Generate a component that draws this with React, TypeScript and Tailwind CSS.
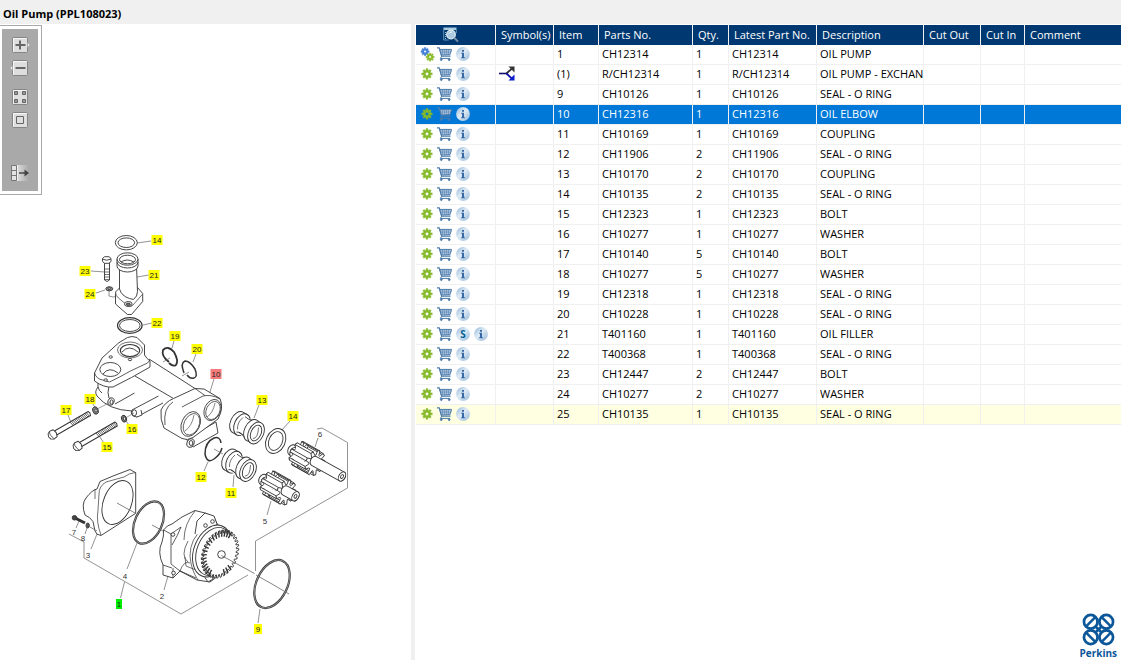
import { clsx } from "clsx"

type Part = {
  item: string
  partNo: string
  qty: number
  description: string
  exchange?: boolean
  assembly?: boolean
  service?: boolean
}

const parts: Part[] = [
  { item: "1", partNo: "CH12314", qty: 1, description: "OIL PUMP", assembly: true },
  { item: "(1)", partNo: "R/CH12314", qty: 1, description: "OIL PUMP - EXCHAN", exchange: true },
  { item: "9", partNo: "CH10126", qty: 1, description: "SEAL - O RING" },
  { item: "10", partNo: "CH12316", qty: 1, description: "OIL ELBOW" },
  { item: "11", partNo: "CH10169", qty: 1, description: "COUPLING" },
  { item: "12", partNo: "CH11906", qty: 2, description: "SEAL - O RING" },
  { item: "13", partNo: "CH10170", qty: 2, description: "COUPLING" },
  { item: "14", partNo: "CH10135", qty: 2, description: "SEAL - O RING" },
  { item: "15", partNo: "CH12323", qty: 1, description: "BOLT" },
  { item: "16", partNo: "CH10277", qty: 1, description: "WASHER" },
  { item: "17", partNo: "CH10140", qty: 5, description: "BOLT" },
  { item: "18", partNo: "CH10277", qty: 5, description: "WASHER" },
  { item: "19", partNo: "CH12318", qty: 1, description: "SEAL - O RING" },
  { item: "20", partNo: "CH10228", qty: 1, description: "SEAL - O RING" },
  { item: "21", partNo: "T401160", qty: 1, description: "OIL FILLER", service: true },
  { item: "22", partNo: "T400368", qty: 1, description: "SEAL - O RING" },
  { item: "23", partNo: "CH12447", qty: 2, description: "BOLT" },
  { item: "24", partNo: "CH10277", qty: 2, description: "WASHER" },
  { item: "25", partNo: "CH10135", qty: 1, description: "SEAL - O RING" },
]

const columns = [
  { label: "Symbol(s)", width: "w-[58px]" },
  { label: "Item", width: "w-[45px]" },
  { label: "Parts No.", width: "w-[94px]" },
  { label: "Qty.", width: "w-[36px]" },
  { label: "Latest Part No.", width: "w-[88px]" },
  { label: "Description", width: "w-[107px]" },
  { label: "Cut Out", width: "w-[57px]" },
  { label: "Cut In", width: "w-[44px]" },
  { label: "Comment", width: "" },
]

// Points of a toothed ellipse, rotated by `rot` degrees
function toothed(cx: number, cy: number, rx: number, ry: number, rot: number, teeth: number, depth: number) {
  const a = (rot * Math.PI) / 180
  const pts: number[][] = []
  for (let i = 0; i < teeth; i++) {
    const shape = [
      [0.1, depth],
      [0.3, 1],
      [0.65, 1],
      [0.85, depth],
    ]
    for (const [off, r] of shape) {
      const t = ((i + off) / teeth) * Math.PI * 2
      const x = Math.cos(t) * rx * r
      const y = Math.sin(t) * ry * r
      pts.push([cx + x * Math.cos(a) - y * Math.sin(a), cy + x * Math.sin(a) + y * Math.cos(a)])
    }
  }
  return pts
}

const toPoints = (pts: number[][]) => pts.map((p) => p.map((n) => n.toFixed(2)).join(",")).join(" ")

/* ---------- small icons ---------- */

const COG =
  "M5 0h2v1.6l1.2.5L9.4 1l1.5 1.5-1.1 1.2.5 1.2H12v2.2h-1.7l-.5 1.2 1.1 1.2L9.4 11l-1.2-1.1-1.2.5V12H5v-1.6l-1.2-.5L2.6 11 1.1 9.5l1.1-1.2-.5-1.2H0V4.9h1.7l.5-1.2-1.1-1.2L2.6 1l1.2 1.1L5 1.6z M6 4.200a1.800 1.800 0 1 0 0 3.600a1.800 1.800 0 1 0 0-3.600z"

function GearIcon({ double }: { double?: boolean }) {
  if (double) {
    return (
      <svg viewBox="0 0 12 14" className="w-3 h-3.5 overflow-visible">
        <path d={COG} fill="#3f7fd6" stroke="#3f7fd6" strokeWidth=".7" fillRule="evenodd" transform="translate(0 .5) scale(.68)" />
        <path d={COG} fill="#8cbb2c" stroke="#8cbb2c" strokeWidth=".7" fillRule="evenodd" transform="translate(5 6) scale(.68)" />
      </svg>
    )
  }
  return (
    <svg viewBox="0 0 12 14" className="w-3 h-3.5">
      <path d={COG} fill="#86b92b" stroke="#86b92b" strokeWidth=".5" fillRule="evenodd" transform="translate(.7 1.6) scale(.88)" />
    </svg>
  )
}

function CartIcon() {
  return (
    <svg viewBox="0 0 15 14" className="w-[15px] h-3.5" fill="none" stroke="#4c7bab">
      <path d="M0 .8h2.2l2.4 8.4h9" strokeWidth="1.2" />
      <path d="M2.8 2.4H14.6L13 7.6 4.4 8z" fill="#c9dbec" />
      <path d="M3.2 4.1h11M3.8 5.8h9.8M5.4 2.4v5.4M7.4 2.4v5.4M9.4 2.4v5.2M11.4 2.4v5.2" strokeWidth=".6" />
      <path d="M4.8 9.2l-1.4 2.2H13" />
      <circle cx="4.3" cy="12.6" r=".9" fill="#4c7bab" />
      <circle cx="12.2" cy="12.6" r=".9" fill="#4c7bab" />
    </svg>
  )
}

function Orb({ service }: { service?: boolean }) {
  return (
    <svg viewBox="0 0 14 14" className="w-3.5 h-3.5">
      <defs>
        <linearGradient id="orb" x1="0" y1="0" x2="1" y2="1">
          <stop offset="0" stopColor="#93b7d8" />
          <stop offset=".45" stopColor="#dfebf5" />
          <stop offset="1" stopColor="#94b7d7" />
        </linearGradient>
      </defs>
      <circle cx="7" cy="7" r="6.9" fill="url(#orb)" />
      {service ? (
        <text x="7" y="10.6" textAnchor="middle" fontSize="10" fontWeight="700" fill="#006296">
          S
        </text>
      ) : (
        <path d="M6 2.9h2v1.8H6z M5.2 5.8H8v4.4h.9v1H5.2v-1H6V6.8h-.8z" fill="#3668a5" />
      )}
    </svg>
  )
}

function ExchangeIcon() {
  return (
    <svg viewBox="0 0 16 15" className="w-4 h-[15px]" fill="none">
      <path d="M0 7.5h8" stroke="#10106c" strokeWidth="1.600" />
      <path d="M7.5 7.5l6-5.5" stroke="#333" strokeWidth="1.800" />
      <path d="M7.5 7.5l5.5 5.2" stroke="#1010a8" strokeWidth="1.800" />
      <path d="M9.500.500h6v6z" fill="#333" />
      <path d="M15.500 8.500v6h-6z" fill="#0a1fd0" />
    </svg>
  )
}

function PreviewIcon() {
  return (
    <svg viewBox="0 0 16 16" className="block w-4 h-4" fill="none">
      <path d="M.5.500h13v2.500H.5z" fill="#a9cade" />
      <path d="M.7 1v12h5M13.3 3v3" stroke="#5f93b5" />
      <path d="M2.5 5v7" stroke="#9fc3d8" strokeDasharray="1 1" />
      <circle cx="8" cy="7.5" r="4.3" fill="#a8c9df" stroke="#e4eff6" strokeWidth="1.2" />
      <path d="M6 6.5a3 3 0 0 1 3-1.5" stroke="#fff" />
      <path d="M11.2 10.8l3.8 3.8" stroke="#7590a6" strokeWidth="2" />
    </svg>
  )
}

/* ---------- drawing toolbar ---------- */

const TOOLS = [
  { label: "Zoom in", gap: "", shape: <path d="M3.500 8h10M8 3.500v9" strokeWidth="2" />, tab: "M15.500 5.500l2.500 2.500-2.500 2.500z" },
  { label: "Zoom out", gap: "mt-[7px]", shape: <path d="M3.500 8h10" strokeWidth="2" />, tab: "M.5 5.500l-2.500 2.500 2.500 2.500z" },
  {
    label: "Fit to window",
    gap: "mt-[13px]",
    shape: <path d="M2.500 2.500h3v3h-3zM10.500 2.500h3v3h-3zM2.500 10.500h3v3h-3zM10.500 10.500h3v3h-3z" fill="#999" />,
  },
  { label: "Actual size", gap: "mt-[7px]", shape: <path d="M4.500 4.500h7v7h-7z" /> },
]

function Toolbar() {
  return (
    <div className="w-[42px] border border-l-0 border-[#a8a8a8] bg-white py-[3px] pl-0.5 pr-[3px]">
      <div className="flex flex-col items-center bg-[#a9a9a9] pt-2 pb-2.5">
        {TOOLS.map((tool) => (
          <button key={tool.label} type="button" aria-label={tool.label} className={clsx("block", tool.gap)}>
            <svg viewBox="0 0 16 16" className="block w-4 h-4 overflow-visible" fill="none" stroke="#666">
              <rect x=".5" y=".5" width="15" height="15" rx="1" fill="#dedede" stroke="#858585" />
              <path d="M1.500 14.500v-13h13" stroke="#f6f6f6" />
              {tool.tab && <path d={tool.tab} fill="#eee" stroke="#9a9a9a" strokeWidth=".5" />}
              {tool.shape}
            </svg>
          </button>
        ))}
        <button type="button" aria-label="Toggle panel" className="mt-[37px]">
          <svg viewBox="0 0 16 16" className="block w-4 h-4 overflow-visible" fill="none" stroke="#777">
            <defs>
              <linearGradient id="fade">
                <stop offset="0" stopColor="#dcdcdc" />
                <stop offset="1" stopColor="#a9a9a9" />
              </linearGradient>
            </defs>
            <path d="M-.5.500h5v15h-5z" fill="#e4e4e4" />
            <path d="M-.500 5.500h5M-.500 10.500h5" />
            <path d="M5.500 0h11v16h-11z" fill="url(#fade)" stroke="none" />
            <path d="M5.500 0v16" stroke="#f0f0f0" />
            <path d="M7 8h7" stroke="#444" strokeWidth="1.500" />
            <path d="M12.500 4.500L17 8l-4.500 3.500z" fill="#444" stroke="none" />
          </svg>
        </button>
      </div>
    </div>
  )
}

/* ---------- exploded view ---------- */

const callouts = [
  { n: "14", x: 157, y: 240 },
  { n: "23", x: 85, y: 271 },
  { n: "21", x: 154, y: 275 },
  { n: "24", x: 90, y: 294 },
  { n: "22", x: 157, y: 323 },
  { n: "19", x: 175, y: 336 },
  { n: "20", x: 197, y: 349 },
  { n: "10", x: 216, y: 374, fill: "#f47c7c" },
  { n: "18", x: 90, y: 399 },
  { n: "13", x: 262, y: 400 },
  { n: "17", x: 66, y: 410 },
  { n: "14", x: 293, y: 416 },
  { n: "16", x: 132, y: 429 },
  { n: "15", x: 107, y: 447 },
  { n: "12", x: 201, y: 477 },
  { n: "11", x: 231, y: 493 },
  { n: "1", x: 119, y: 604, fill: "#00f000" },
  { n: "9", x: 258, y: 629 },
]

const plainNumbers = [
  { n: "6", x: 320, y: 434 },
  { n: "5", x: 265, y: 521 },
  { n: "7", x: 74, y: 532 },
  { n: "8", x: 83, y: 538 },
  { n: "3", x: 88, y: 555 },
  { n: "4", x: 125, y: 576 },
  { n: "2", x: 162, y: 596 },
]

function Bolt({ x, y, length, angle }: { x: number; y: number; length: number; angle: number }) {
  const threads = []
  for (let t = length * 0.5; t < length - 1; t += 1.7) threads.push(`M${t.toFixed(1)} -2.300l1 4.600`)
  return (
    <g transform={`translate(${x} ${y}) rotate(${angle})`}>
      <path d={`M3 -2.300H${length}q1.500 2.300 0 4.600H3z`} />
      <path d={threads.join("")} strokeWidth=".7" />
      <path d="M-4 -3l2.500-1.500 4 .5 1.200 4-1.200 4-4 .5L-4 3l-1-3z" />
      <path d="M-1.500 -4.300l-1 2.200.5 4 1 2.400" strokeWidth=".7" />
    </g>
  )
}

function Coupling({ x, y }: { x: number; y: number }) {
  return (
    <g transform={`translate(${x} ${y})`}>
      <ellipse rx="7.500" ry="11.500" transform="rotate(25)" />
      <path d="M4.800 -10.400l5 2.800-9.800 21-5-2.800" stroke="none" />
      <path d="M4.800 -10.400l4.500 2.500M-4.800 10.400l4 2.300" />
      <ellipse cx="4" cy="2.200" rx="7.500" ry="11.500" transform="rotate(25 4 2.200)" />
      <path d="M6 -5.500L18 1 10 17-3 9z" stroke="none" />
      <path d="M7 -5.800q4 4 8.500 3.500M-1.500 9.500q5 0 7.500 5M1 10l4 2.600" />
      <path d="M5 -5q-6 5-5.500 12" strokeWidth=".7" />
      <ellipse cx="14" cy="8" rx="7.500" ry="11.500" transform="rotate(25 14 8)" />
      <ellipse cx="18" cy="10.500" rx="7.500" ry="11.500" transform="rotate(25 18 10.500)" />
      <ellipse cx="18" cy="10.500" rx="5" ry="8.300" transform="rotate(25 18 10.500)" />
      <path d="M15 16q5 0 5.500-11" strokeWidth=".7" />
    </g>
  )
}

function Pinion({ x, y, shaft }: { x: number; y: number; shaft: number }) {
  const back = toothed(x - 7, y - 5, 9, 13, 25, 9, 0.64)
  const front = toothed(x + 9, y + 4, 9, 13, 25, 9, 0.64)
  // faces turned towards the back of the gear are painted last
  const facing = (i: number) => -(back[i][0] - (x - 7)) * 16 - (back[i][1] - (y - 5)) * 9
  const teeth = back
    .map((_, i) => i)
    .filter((i) => i % 4 === 1)
    .sort((a, b) => facing(a) - facing(b))
  return (
    <g>
      <g transform={`translate(${x - 14} ${y - 9})`}>
        <ellipse rx="4" ry="5.500" transform="rotate(25)" />
        <ellipse cx="3" cy="1.500" rx="4" ry="5.500" transform="rotate(25)" />
      </g>
      <polygon points={toPoints(back)} />
      {teeth.map((i) => (
        <g key={i}>
          <polygon points={toPoints([back[i - 1], front[i - 1], front[i + 2], back[i + 2]])} stroke="none" />
          <polygon points={toPoints([back[i], back[i + 1], front[i + 1], front[i]])} strokeWidth=".9" />
        </g>
      ))}
      <polygon points={toPoints(front)} />
      <g transform={`translate(${x + 8} ${y + 2}) rotate(29)`}>
        <path d={`M0 -5H${shaft}a3.200 5 0 0 1 0 10H0a3.500 5 0 0 1 0-10z`} />
        <ellipse cx={shaft} rx="3.200" ry="5" />
        <ellipse cx={shaft} rx="1.300" ry="2" />
      </g>
    </g>
  )
}

function PumpDrawing() {
  const outerTeeth = toothed(220, 554, 17.5, 25, 22, 34, 0.87)
  return (
    <svg
      viewBox="0 195 360 450"
      className="block w-[360px] h-[450px] max-w-full"
      fill="#fff"
      stroke="#333"
      strokeWidth=".9"
      strokeLinejoin="round"
      role="img"
      aria-label="Oil pump exploded view"
    >
      {/* Assembly bracket and leader lines */}
      <g fill="none" stroke="#777" strokeWidth=".8">
        <path d="M317 429l5-1 25.500 14.500v45.500L255.500 541v30M248 575L181 614 84 558v-16l-15-8M124.500 582l-4 16" />
        <path d="M137 243l14-2M91 271l14 1M137 277l12-2M96 293l9-3M109 286v10l4 1 15-2v6M143 325l9-2" />
        <path d="M174 341l-2 7M196 354l-3 8M214 379l-5 16M92 403l3 4M68 415l4 10M129 425l-3-4M104 443l-7-10" />
        <path d="M259 405l-5 13M290 421l-9 10M204 471l4-9M233 487l1-12M318 438l-3 9M267 515l4-14" />
        <path d="M91 549l6-15M127 569l10-26M164 590l4-14M258 623l2-14M76 528l3-7M85 534l2-6" />
      </g>

      {/* 14, 21-24: filler neck */}
      <ellipse cx="126.300" cy="242.700" rx="11" ry="7.200" />
      <ellipse cx="126.300" cy="242.700" rx="8.300" ry="4.800" />
      <path d="M115.500 292v12l12 10.500h4l11.200-13v-8l-6-7H121z" />
      <path d="M115.500 292q0 4 3 6l9.500 8q3 1.500 5-1l9.700-11" strokeWidth=".7" />
      <path d="M119.500 266v23q2 7 10 9.500l4 1q4-3 4-8l-1-25.500" />
      <path d="M117 259v7a10.500 6 0 0 0 21 0v-7" />
      <path d="M117 262a10.500 6 0 0 0 21 0" />
      <ellipse cx="127.500" cy="259" rx="10.500" ry="6.200" />
      <ellipse cx="127.500" cy="259.500" rx="8" ry="4.300" />
      <path d="M121 262q6-4 13 0" />
      <ellipse cx="128.300" cy="304" rx="3.800" ry="2.500" />
      <ellipse cx="128.300" cy="304.300" rx="2" ry="1.200" fill="#777" />
      <path d="M104.500 262v18q2.500 3 5 0v-18z" />
      <path d="M104.500 269h5M104.500 272h5M104.500 274.500h5M104.500 277h5M104.500 279.500h5" strokeWidth=".7" />
      <path d="M102.500 258.500l2-1.800h4.500l2 1.800v3l-2 1.800h-4.500l-2-1.800zM102.500 259q4 2.500 8.500 0" />
      <ellipse cx="109.300" cy="288.800" rx="3.500" ry="2" fill="#999" />
      <ellipse cx="109.300" cy="288.800" rx="1.500" ry=".8" />
      <ellipse cx="129.800" cy="325.500" rx="12.300" ry="7.800" strokeWidth="1.200" />
      <ellipse cx="129.800" cy="325.500" rx="10.300" ry="6" />

      {/* 10: elbow body */}
      <path d="M98 382L96 392L100 398Q112 410 132 411L138 417L163 404L175 402L196 389L149 359Z" stroke="none" />
      <path d="M98 383L98 387Q94 392 97 396Q108 410 132 411M98 387Q99 391 102 393M136.500 417L163 403M149 359L195 388.500M135 376L173.500 398.500" fill="none" />
      <path d="M109 386Q107 393 109 398M115 404L134.500 393M132 410L158.500 396M110 385L118 382" fill="none" />
      <ellipse cx="111" cy="401.500" rx="3" ry="3.800" transform="rotate(20 111 401.500)" />
      <ellipse cx="111.500" cy="402" rx="1.500" ry="2.200" />
      <path d="M132 410q-2 3 1 6l4 1 5-2-1-5" />
      <ellipse cx="134.300" cy="412.800" rx="2.300" ry="3" />
      <path d="M127.500 337.500Q132 335.500 137 337.500L144.500 345V355Q147 359 150 361V367L131.500 377.500L113 387Q104 388 94.500 381V373L102 358L118.500 343Z" />
      <path d="M94.500 373q2 6 8 7l7 2 10-5 11-6 17-8 2.500-3" fill="none" strokeWidth=".8" />
      <ellipse cx="130" cy="350" rx="12.500" ry="8" strokeWidth=".7" />
      <ellipse cx="130" cy="350.500" rx="9.700" ry="6" strokeWidth="1.200" />
      <path d="M122 352q7-8 16 0" />
      <ellipse cx="110.300" cy="369.500" rx="10.500" ry="7" />
      <path d="M103 374q6-8 15-1" />
      <ellipse cx="110.700" cy="357" rx="1.700" ry="1.200" />
      <ellipse cx="130" cy="359.500" rx="1.700" ry="1.200" />
      <ellipse cx="105.700" cy="380" rx="1.800" ry="1.200" />
      <path d="M186 439l7 8 25-14-2-11z" />
      <ellipse cx="190.500" cy="443" rx="3.500" ry="4.500" transform="rotate(20 190.500 443)" />
      <ellipse cx="191" cy="443" rx="1.800" ry="2.500" />
      <path d="M173.500 398.500L195 388.500L204 389L220 398.500Q224 408 218 419L193 437.500Q187 441 182 438.500L164 428Q160 420 161 410Q165 402 173.500 398.500Z" />
      <path d="M173 402q-10 6-8 23M182 407L203 396Q211 394 220 399M195 388.500l10 7" fill="none" strokeWidth=".8" />
      <ellipse cx="190.700" cy="424" rx="9" ry="13" transform="rotate(25 190.700 424)" strokeWidth=".8" />
      <ellipse cx="191.500" cy="424.300" rx="7.500" ry="11.300" transform="rotate(25 191.500 424.300)" strokeWidth=".7" />
      <path d="M185 431q7-5 9-16" fill="none" strokeWidth=".6" />
      <ellipse cx="212.500" cy="410" rx="8" ry="11" transform="rotate(25 212.500 410)" strokeWidth=".8" />
      <ellipse cx="213" cy="410.500" rx="6.700" ry="9.500" transform="rotate(25 213 410.500)" strokeWidth=".7" />
      <path d="M207 417q6-4 8-14" fill="none" strokeWidth=".6" />

      {/* 19, 20, 12: snap rings */}
      <g fill="none" strokeWidth="1.800">
        <path d="M169 362Q161 356 163 350Q168 345 174 352Q179 361 176 365Q173 367 169 363" />
        <path d="M184 373Q180 363 185 361Q190 361 195 369Q198 377 194 378Q190 379 187 375" strokeWidth="1.500" />
        <path d="M221 443q-1-7-7-5-9 4-9 16 2 10 9 5 6-4 8-11" strokeWidth="1.500" />
        <path d="M163 362l7-4M182 376l7-4M214 449l9 5" stroke="#777" strokeWidth=".8" />
      </g>

      {/* 15-18: bolts and washers */}
      <path d="M93 411l18-9M122 420l12-7" fill="none" stroke="#777" strokeWidth=".7" />
      <Bolt x={53} y={434.5} length={42} angle={-30} />
      <Bolt x={78} y={446} length={44} angle={-30} />
      <ellipse cx="95.500" cy="410.500" rx="2.700" ry="3.800" fill="#888" transform="rotate(-20 95.500 410.500)" />
      <ellipse cx="96" cy="410.500" rx="1.100" ry="1.800" />
      <ellipse cx="124" cy="418.700" rx="2.500" ry="3.500" fill="#777" transform="rotate(-20 124 418.700)" />
      <ellipse cx="124.500" cy="418.700" rx="1" ry="1.700" />

      {/* 11, 13, 14: couplings and seal */}
      <Coupling x={238} y={422.5} />
      <Coupling x={230} y={460} />
      <ellipse cx="275.700" cy="441" rx="9.500" ry="13" transform="rotate(25 275.700 441)" />
      <ellipse cx="275.700" cy="441" rx="6.700" ry="9.800" transform="rotate(25 275.700 441)" />

      {/* 5, 6: pinions */}
      <Pinion x={306} y={459} shaft={32} />
      <Pinion x={277} y={488.5} shaft={12} />

      {/* 3, 4, 7, 8: cover */}
      <path d="M100 481.500L113 476L130 469.500L135.700 472.700V513.300L101 535.500Q96 535 95 531L93 521.500Q90 517 85 515Q81 504 86 498Q92 490 97 489Z" />
      <path d="M135.700 472.500Q129 473 124 477L106 482Q99 486 99 494L98 510Q96 522 101 535M95 489v10" fill="none" strokeWidth=".7" />
      <ellipse cx="117.500" cy="502.500" rx="14" ry="23" transform="rotate(22 117.500 502.500)" />
      <path d="M117 503l18 10M152 525l11 6" fill="none" stroke="#777" />
      <ellipse cx="148.500" cy="522.500" rx="13.500" ry="22.500" fill="none" strokeWidth="2.200" transform="rotate(25 148.500 522.500)" />
      <ellipse cx="148.500" cy="522.500" rx="13.500" ry="22.500" fill="none" stroke="#fff" strokeWidth=".4" transform="rotate(25 148.500 522.500)" />
      <path d="M75 518l10 5" strokeWidth="3" />
      <circle cx="74.500" cy="517.800" r="2.300" fill="#444" />
      <ellipse cx="87.700" cy="525.500" rx="1.700" ry="2.500" fill="#555" />
      <path d="M90 527l7 4" stroke="#777" />

      {/* 2: pump housing with drive gear */}
      <path d="M163.500 530Q167 525 172 524L182 517L195 510.500L205 513L214 517L217 524L232 535L226 570L210 582L197 580L180 571L173 578L163 575V565Q157 552 162 542Q164 536 163.500 530Z" />
      <path d="M163.500 530L171 534V564L180 571M171 534L181 527Q178 535 172 545M163 565L172 568M173 568V578M180 571L196 578" fill="none" strokeWidth=".8" />
      <path d="M195 511Q184 524 184 540M204 528Q190 538 190 556Q191 570 198 580M185 557L186 566L196 570M180 571Q184 560 190 563M188 541Q180 556 188 562" fill="none" strokeWidth=".7" />
      <path d="M195 534L197 521L205 513L214 516L217 524L214 532L204 535" />
      <circle cx="205.500" cy="525.500" r="1.800" />
      <circle cx="212.500" cy="521.500" r="1.800" />
      <circle cx="173" cy="534.500" r="1.800" />
      <circle cx="173.500" cy="573" r="1.800" />
      <path d="M204 576l4 6 5-3-2-7z" />
      <ellipse cx="212" cy="551" rx="18" ry="27" transform="rotate(22 212 551)" />
      <ellipse cx="214" cy="551.500" rx="17" ry="25" transform="rotate(22 214 551.500)" />
      <polygon points={toPoints(outerTeeth)} />
      {outerTeeth.map((p, i) =>
        i % 4 === 1 && p[0] < 232 && p[1] < 576 ? (
          <path
            key={i}
            d={`M${p[0].toFixed(2)} ${p[1].toFixed(2)}l${((220 - p[0]) * 0.28).toFixed(2)} ${((554 - p[1]) * 0.28).toFixed(2)}`}
            strokeWidth="1.400"
          />
        ) : null,
      )}
      <circle cx="221.500" cy="554.500" r="3.800" />
      <path d="M221.500 555.500l33 18M256 575l16 9" fill="none" stroke="#777" />

      {/* 9: large seal */}
      <ellipse cx="272" cy="584" rx="15.500" ry="25.500" fill="none" strokeWidth="2.200" transform="rotate(25 272 584)" />
      <ellipse cx="272" cy="584" rx="15.500" ry="25.500" fill="none" stroke="#fff" strokeWidth=".4" transform="rotate(25 272 584)" />
      <path d="M272 584l17 10" stroke="#777" />

      <g stroke="none" fontFamily="'Liberation Sans', Arial, sans-serif" fontSize="8" textAnchor="middle">
        {callouts.map((c) => {
          const width = c.n.length > 1 ? 11 : c.n === "1" ? 6 : 8
          return (
            <g key={`${c.n}-${c.y}`}>
              <rect x={c.x - width / 2} y={c.y - 5} width={width} height="10" fill={c.fill ?? "#ffff00"} />
              <text x={c.x} y={c.y + 3} fill="#222">
                {c.n}
              </text>
            </g>
          )
        })}
        {plainNumbers.map((c) => (
          <text key={c.n} x={c.x} y={c.y + 3} fill="#333">
            {c.n}
          </text>
        ))}
      </g>
    </svg>
  )
}

/* ---------- parts list ---------- */

function PartRow({ part, selected, last }: { part: Part; selected: boolean; last: boolean }) {
  const cell = "border-r border-b border-[#f0f0f0] px-[3px] pb-0.5 overflow-hidden whitespace-nowrap last:border-r-0"
  return (
    <tr
      aria-selected={selected}
      className={clsx("h-5", selected && "bg-[#0078d7] text-white", last && "bg-[#ffffe1]")}
    >
      <td className="border-r border-b border-[#f0f0f0] pl-[5px] pb-px">
        <div className="flex items-center gap-1">
          <GearIcon double={part.assembly} />
          <button type="button" aria-label={`Add ${part.partNo} to cart`}>
            <CartIcon />
          </button>
          {part.service && (
            <button type="button" aria-label="Service">
              <Orb service />
            </button>
          )}
          <button type="button" aria-label={`Info on ${part.partNo}`}>
            <Orb />
          </button>
        </div>
      </td>
      <td className={cell}>{part.exchange && <ExchangeIcon />}</td>
      <td className={cell}>{part.item}</td>
      <td className={cell}>{part.partNo}</td>
      <td className={cell}>{part.qty}</td>
      <td className={cell}>{part.partNo}</td>
      <td className={cell}>{part.description}</td>
      <td className={cell}></td>
      <td className={cell}></td>
      <td className={cell}></td>
    </tr>
  )
}

function PerkinsLogo() {
  const quarters = ["", "translate(34 0) scale(-1 1)", "translate(0 34) scale(1 -1)", "translate(34 34) scale(-1 -1)"]
  return (
    <div className="flex flex-col items-center text-[#0b5799]">
      <svg viewBox="0 0 34 34" className="w-[33px] h-[33px]" fill="none" stroke="currentColor" strokeWidth="2.800">
        {quarters.map((transform) => (
          <g key={transform} transform={transform}>
            <circle cx="9" cy="9" r="7" />
            <path d="M4.500 13.500l9-9" strokeWidth="2.600" />
            <path d="M14 14l3 3" />
          </g>
        ))}
      </svg>
      <span className="text-[10px] leading-[14px] font-bold">Perkins</span>
    </div>
  )
}

export default function App() {
  return (
    <div className="flex flex-col min-h-screen bg-white text-black text-[11px] leading-[14px] font-['Open_Sans','Noto_Sans',sans-serif]">
      <header className="h-6 bg-[#f0f0f0] pl-[3px] pt-[7px]">
        <h1 className="font-bold">Oil Pump (PPL108023)</h1>
      </header>

      <main className="flex flex-1">
        <section className="w-[415px] shrink-0 border-r-4 border-[#f0f0f0] pt-px">
          <Toolbar />
          <PumpDrawing />
        </section>

        <section className="flex flex-col flex-1 min-w-0 pl-px pt-px">
          <table className="w-full table-fixed border-separate border-spacing-0">
            <thead>
              <tr className="h-5 bg-[#003971] text-white text-left">
                <th aria-label="Actions" className="w-[80px] border-r border-[#f0f0f0] pl-[27px]">
                  <PreviewIcon />
                </th>
                {columns.map((col) => (
                  <th
                    key={col.label}
                    className={clsx(
                      "border-r border-[#f0f0f0] last:border-r-0 pl-[5px] font-normal overflow-hidden whitespace-nowrap",
                      col.width,
                    )}
                  >
                    {col.label}
                  </th>
                ))}
              </tr>
            </thead>
            <tbody>
              {parts.map((part, i) => (
                <PartRow key={part.item} part={part} selected={part.item === "10"} last={i === parts.length - 1} />
              ))}
            </tbody>
          </table>

          <footer className="mt-auto self-end pr-1">
            <PerkinsLogo />
          </footer>
        </section>
      </main>
    </div>
  )
}
